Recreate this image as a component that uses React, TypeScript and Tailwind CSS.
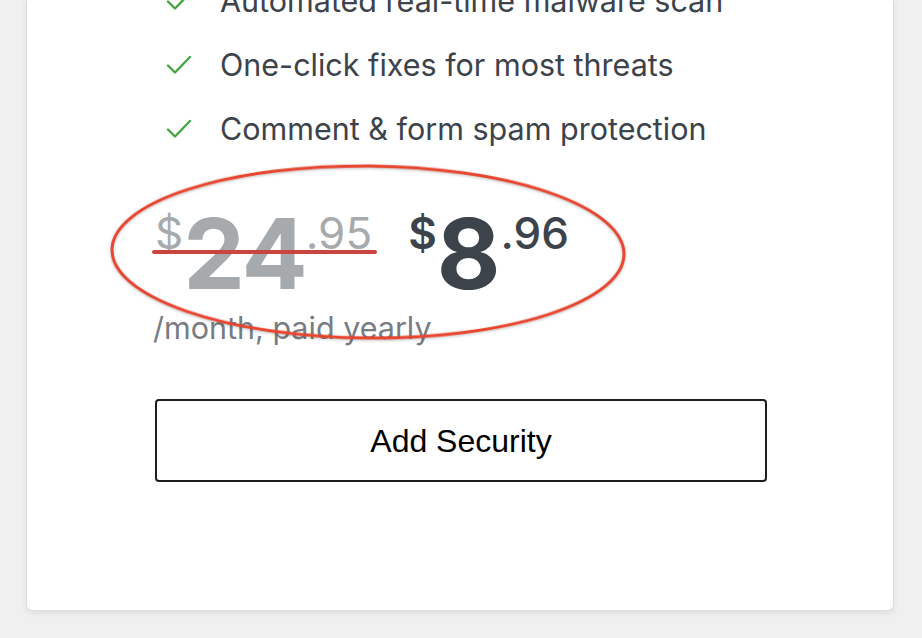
import React from "react";

const features = [
  "Automated real-time malware scan",
  "One-click fixes for most threats",
  "Comment & form spam protection",
];

const Check: React.FC = () => (
  <svg width="26" height="20" viewBox="0 0 26 20" fill="none" className="shrink-0">
    <path d="M2 10.5 L9 17.5 L24 2" stroke="#46a340" strokeWidth="2.4" strokeLinecap="round" strokeLinejoin="round" />
  </svg>
);

const App: React.FC = () => {
  return (
    <div className="min-h-screen bg-[#f0f0f0] px-[26px] pb-[27px] overflow-hidden" style={{ width: 922, height: 638 }}>
      <div className="flex flex-col bg-white w-[868px] h-[611px] rounded-b-[6px] border border-t-0 border-[#dcdcde] shadow-[0_2px_6px_rgba(0,0,0,0.08)] pl-[128px] pr-[128px] font-['Inter',sans-serif]">
        <ul className="-mt-[31px]">
          {features.map((f) => (
            <li key={f} className="h-[64px] flex items-center text-[30.5px] text-[#3c434a]">
              <span className="w-[65px] pl-[11px] flex items-center">
                <Check />
              </span>
              {f}
            </li>
          ))}
        </ul>

        <div className="relative mt-[44px]">
          <div className="flex items-start gap-[36px]">
            <div className="relative flex items-start text-[#a7aaad] font-bold">
              <span className="text-[44px] leading-none mt-[6px] font-normal">$</span>
              <span className="text-[98px] leading-none tracking-[-2px]">24</span>
              <span className="text-[44px] leading-none mt-[6px] font-normal">.95</span>
              <div className="absolute left-[-3px] right-[-5px] top-[45px] h-[4px] rounded-full bg-[#c9453f]" />
            </div>
            <div className="flex items-start text-[#3c434a]">
              <span className="text-[44px] leading-none mt-[6px] font-semibold">$</span>
              <span className="text-[98px] leading-none font-bold">8</span>
              <span className="text-[44px] leading-none mt-[6px] font-medium">.96</span>
            </div>
          </div>
          <div className="text-[30.5px] leading-[34px] text-[#787c82] mt-[8px] -ml-[2px]">/month, paid yearly</div>

          <svg
            className="absolute pointer-events-none"
            style={{ left: -48, top: -42, overflow: "visible" }}
            width="520"
            height="180"
          >
            <ellipse
              cx="261"
              cy="89"
              rx="256"
              ry="86"
              fill="none"
              stroke="#e8442e"
              strokeWidth="3"
              transform="rotate(0.5 261 89)"
              style={{ filter: "drop-shadow(0 1px 1.5px rgba(0,0,0,0.25))" }}
            />
          </svg>
        </div>

        <button className="mt-[54px] w-[612px] h-[83px] border-2 border-[#1e1e1e] rounded-[4px] bg-white text-[32px] text-black font-['Liberation_Sans',sans-serif]">
          Add Security
        </button>
      </div>
    </div>
  );
};

export default App;
